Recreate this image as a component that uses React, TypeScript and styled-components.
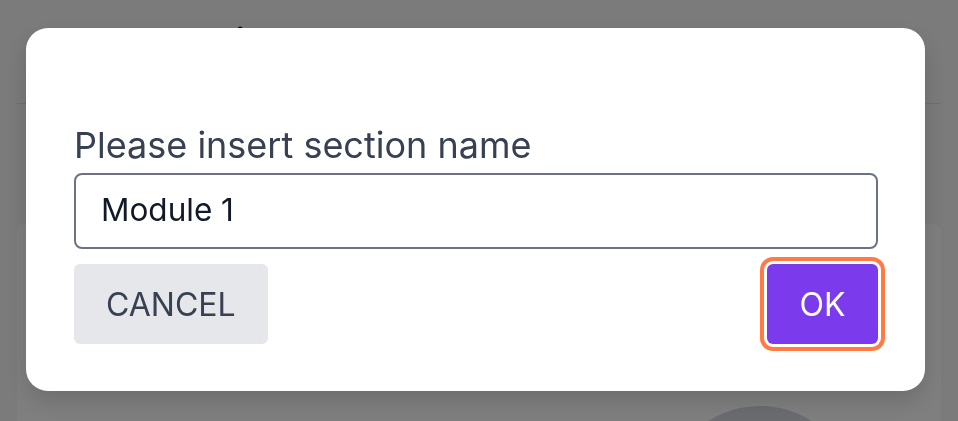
import React, { useState } from "react";
import styled, { createGlobalStyle } from "styled-components";

const GlobalStyle = createGlobalStyle`
  html, body {
    margin: 0;
    padding: 0;
    height: 100%;
  }
  body {
    font-family: Inter, "Noto Sans", sans-serif;
    background: #f6f7f6;
    overflow: hidden;
  }
`;

const Page = styled.div`
  height: 421px;
  overflow: hidden;
  background: #f6f7f6;
`;

const Header = styled.header`
  height: 104px;
  margin: 0 17px;
  padding: 21px 40px 0;
  box-sizing: border-box;
  border-bottom: 1px solid #dedede;
`;

const Title = styled.h1`
  margin: 0;
  font-size: 30px;
  line-height: 36px;
  font-weight: 700;
  color: #111827;
`;

const Body = styled.main`
  padding: 120px 17px 0;
`;

const Card = styled.section`
  display: grid;
  grid-template-columns: 1fr 192px;
  gap: 24px;
  padding: 182px 85px 40px 24px;
  background: #ffffff;
  border-radius: 8px;
`;

const Avatar = styled.div`
  width: 192px;
  height: 192px;
  border-radius: 50%;
  background: #d6d8e0;
`;

const Overlay = styled.div`
  position: fixed;
  inset: 0;
  display: flex;
  align-items: flex-start;
  padding: 28px 33px 0 26px;
  background: rgba(0, 0, 0, 0.5);
`;

const Modal = styled.div`
  flex: 1;
  background: #ffffff;
  border-radius: 22px;
  padding: 99px 47px 47px 48px;
  box-shadow: 0 10px 25px rgba(0, 0, 0, 0.15);
`;

const Label = styled.label`
  display: block;
  font-size: 36px;
  line-height: 36px;
  color: #374151;
  margin-bottom: 10px;
`;

const Input = styled.input`
  display: block;
  width: 100%;
  height: 76px;
  box-sizing: border-box;
  border: 2px solid #6b7280;
  border-radius: 8px;
  padding: 0 25px 4px;
  font-family: Inter, "Noto Sans", sans-serif;
  font-size: 31.5px;
  color: #111827;
  outline: none;
`;

const Actions = styled.div`
  display: flex;
  justify-content: space-between;
  align-items: center;
  margin-top: 15px;
`;

const Button = styled.button<{ $primary?: boolean }>`
  height: 80px;
  min-width: 111px;
  padding: 0 32px;
  border: none;
  border-radius: 6px;
  font-family: Inter, "Noto Sans", sans-serif;
  font-size: 32px;
  text-transform: uppercase;
  cursor: pointer;
  background: ${(p) => (p.$primary ? "#7c3aed" : "#e5e7eb")};
  color: ${(p) => (p.$primary ? "#ffffff" : "#374151")};
  box-shadow: ${(p) =>
    p.$primary ? "0 0 0 3px #ffffff, 0 0 0 7px #ff7a45" : "none"};
`;

export default function App() {
  const [name, setName] = useState("Module 1");
  return (
    <>
      <GlobalStyle />
      <Page>
        <Header>
          <Title>Course Curriculum</Title>
        </Header>
        <Body>
          <Card>
            <div />
            <Avatar />
          </Card>
        </Body>
      </Page>
      <Overlay>
        <Modal>
          <Label htmlFor="section-name">Please insert section name</Label>
          <Input
            id="section-name"
            value={name}
            onChange={(e) => setName(e.target.value)}
          />
          <Actions>
            <Button>Cancel</Button>
            <Button $primary>OK</Button>
          </Actions>
        </Modal>
      </Overlay>
    </>
  );
}
